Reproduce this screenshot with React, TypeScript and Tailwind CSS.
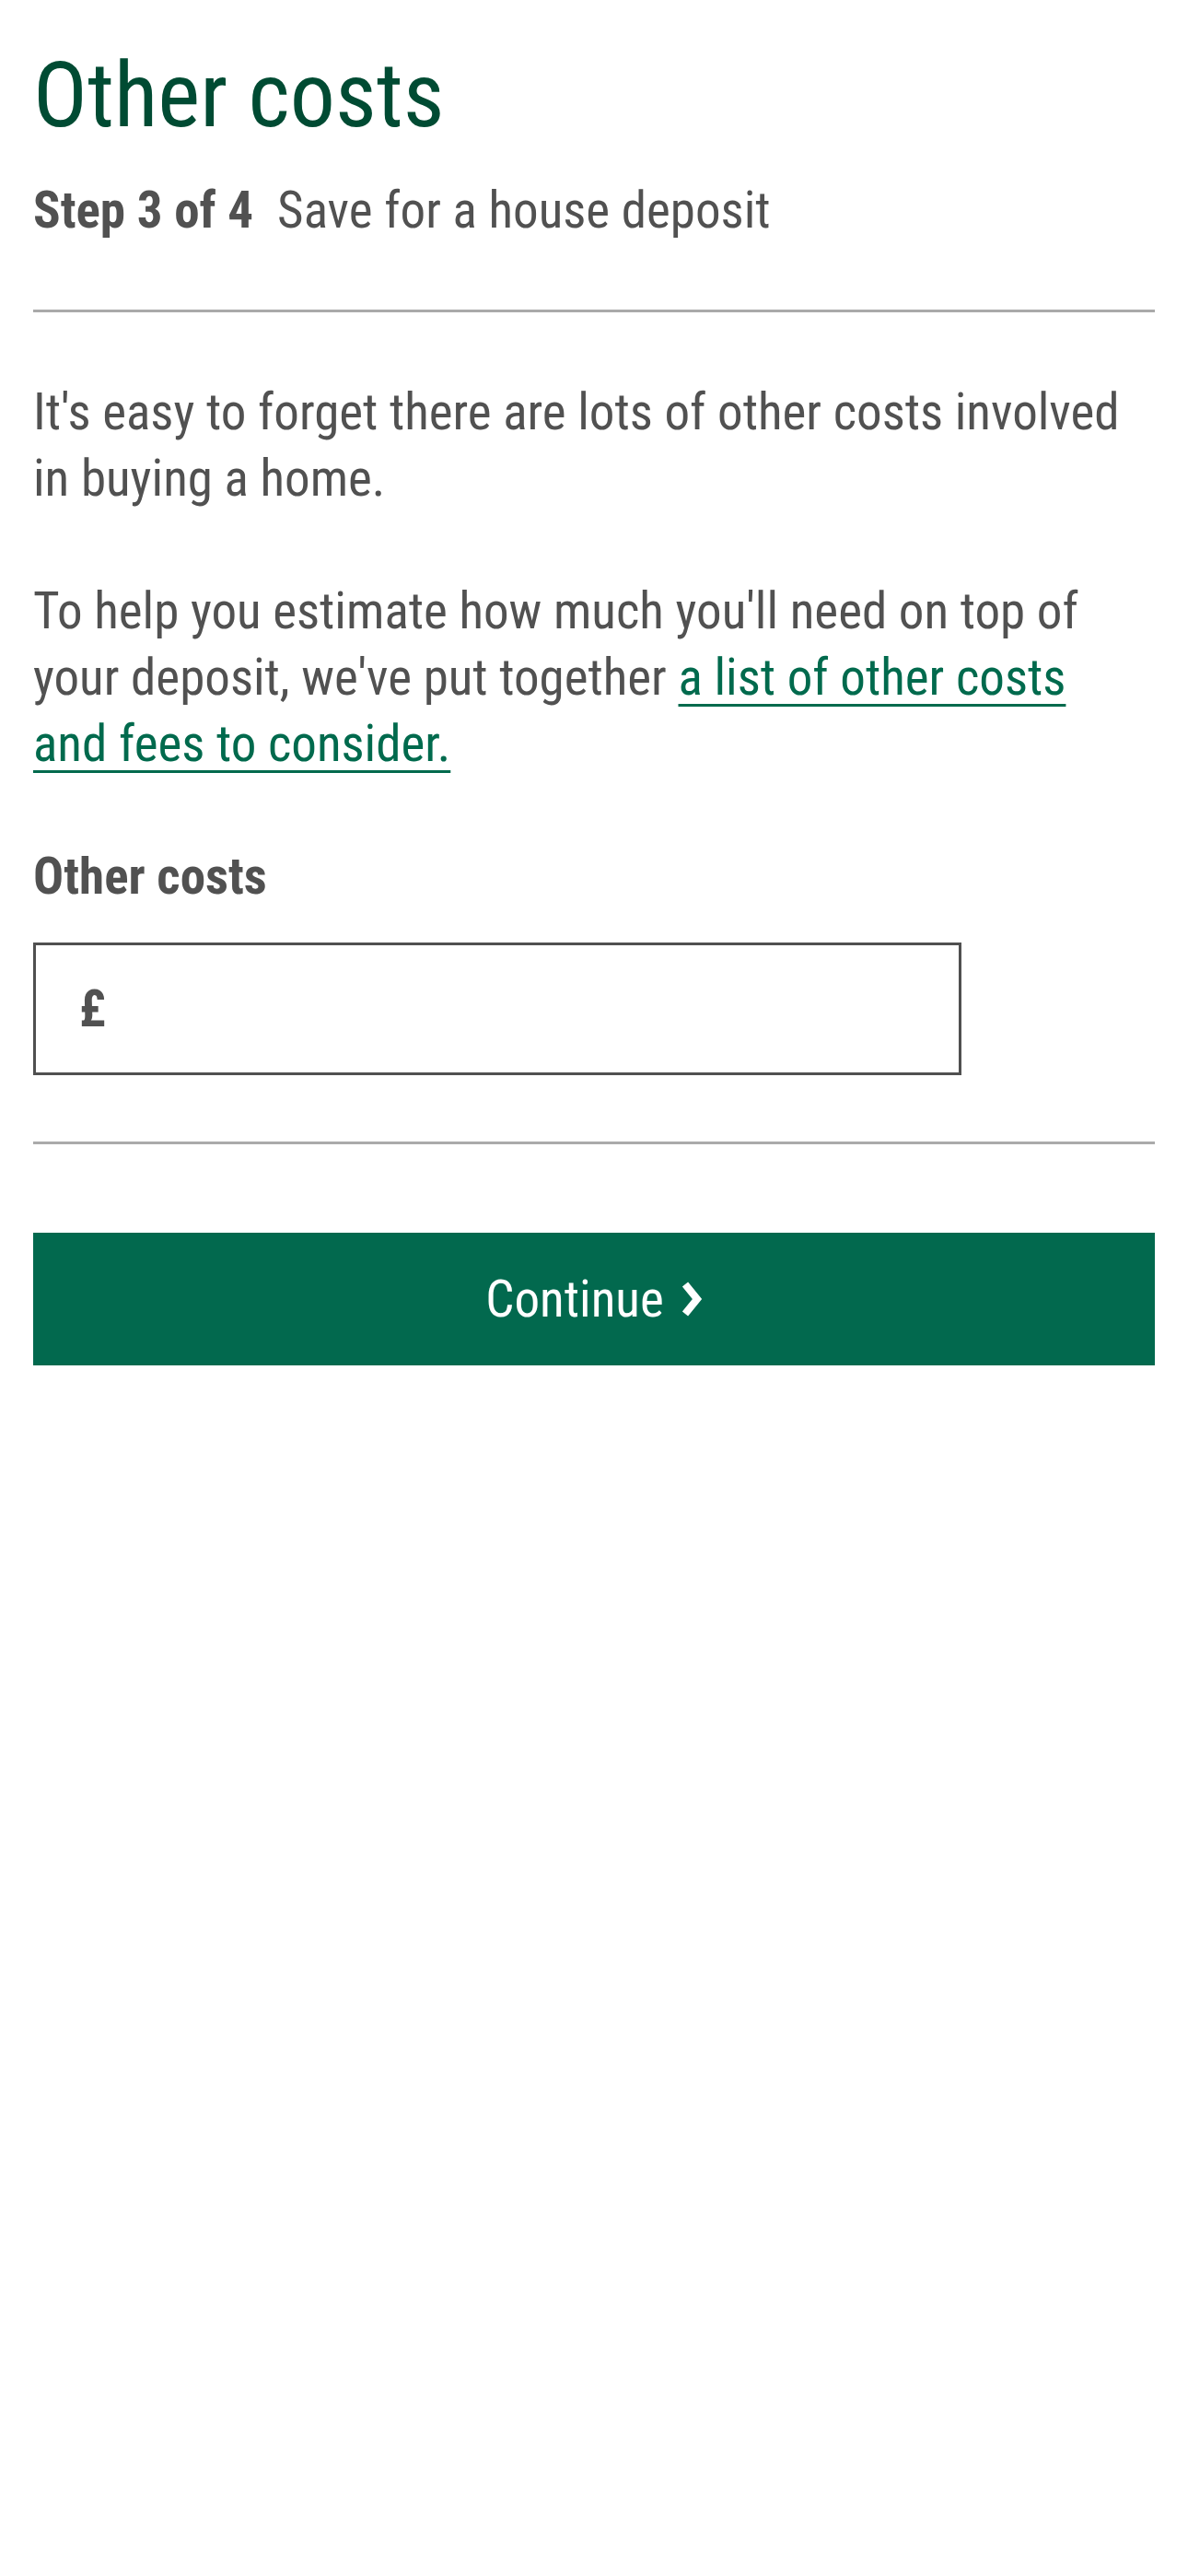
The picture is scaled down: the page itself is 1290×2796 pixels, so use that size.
import React from 'react'

export default function App() {
  return (
    <div className="min-h-screen bg-white font-['Roboto_Condensed','Roboto',sans-serif] text-[#515151]">
      <div className="px-[36px] pt-[46px]">
        <h1 className="text-[98px] leading-[116px] text-[#004b33]">Other costs</h1>
        <p className="mt-[30px] text-[55px] leading-[72px]">
          <span className="font-bold">Step 3 of 4</span>
          <span className="ml-[26px]">Save for a house deposit</span>
        </p>

        <hr className="mt-[72px] border-t-[3px] border-[#aaaaaa]" />

        {/* intro */}
        <div className="mt-[72px] max-w-[1200px] space-y-[72px] text-[55px] leading-[72px]">
          <p>It's easy to forget there are lots of other costs involved in buying a home.</p>
          <p>
            To help you estimate how much you'll need on top of your deposit, we've put together{' '}
            <a
              href="#"
              className="text-[#006a4d] underline decoration-[3px] underline-offset-[10px]"
            >
              a list of other costs and fees to consider.
            </a>
          </p>
        </div>

        {/* other costs field */}
        <label htmlFor="other-costs" className="mt-[72px] block text-[55px] font-bold leading-[72px]">
          Other costs
        </label>
        <div className="mt-[36px] flex h-[144px] w-[1008px] items-center border-[3px] border-[#505050] bg-white">
          <span className="pl-[47px] text-[55px] font-bold leading-none">£</span>
          <input
            id="other-costs"
            type="text"
            inputMode="decimal"
            className="h-full flex-1 bg-transparent px-[16px] text-[55px] text-[#515151] outline-none"
          />
        </div>

        <hr className="mt-[72px] border-t-[3px] border-[#aaaaaa]" />

        <button
          type="button"
          className="mt-[96px] flex h-[144px] w-full items-center justify-center gap-[18px] bg-[#02694e] text-[55px] text-white"
        >
          <span>Continue</span>
          <svg width="24" height="38" viewBox="0 0 24 38" fill="none">
            <polyline
              points="5,3 18,19 5,35"
              stroke="white"
              strokeWidth="8"
              strokeLinejoin="miter"
              strokeLinecap="butt"
            />
          </svg>
        </button>
      </div>
    </div>
  )
}
